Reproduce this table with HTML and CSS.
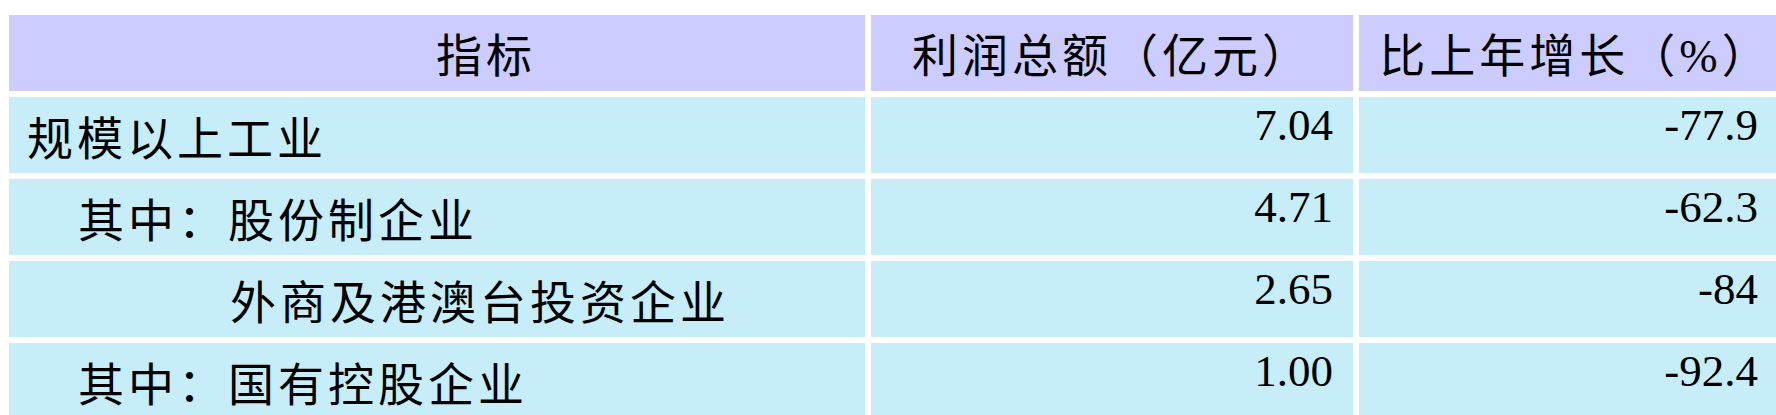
FILE: index.html
```html
<!DOCTYPE html>
<html lang="zh-CN">
<head>
<meta charset="utf-8">
<title>利润总额</title>
<link rel="stylesheet" href="styles.css">
</head>
<body>
<table class="stats">
  <colgroup>
    <col class="c-name">
    <col class="c-profit">
    <col class="c-growth">
  </colgroup>
  <thead>
    <tr>
      <th class="h-name">指标</th>
      <th class="h-profit">利润总额（亿元）</th>
      <th class="h-growth">比上年增长（%）</th>
    </tr>
  </thead>
  <tbody>
    <tr>
      <td class="name lvl0">规模以上工业</td>
      <td class="num">7.04</td>
      <td class="num">-77.9</td>
    </tr>
    <tr>
      <td class="name lvl1">其中：股份制企业</td>
      <td class="num">4.71</td>
      <td class="num">-62.3</td>
    </tr>
    <tr>
      <td class="name lvl4">外商及港澳台投资企业</td>
      <td class="num">2.65</td>
      <td class="num">-84</td>
    </tr>
    <tr>
      <td class="name lvl1">其中：国有控股企业</td>
      <td class="num">1.00</td>
      <td class="num">-92.4</td>
    </tr>
  </tbody>
</table>
</body>
</html>
```
FILE: styles.css
```css
html, body {
  margin: 0;
  padding: 0;
  background: #ffffff;
  overflow: hidden;
}

.stats {
  margin: 9px 0 0 3px;
  border-collapse: separate;
  border-spacing: 6px;
  table-layout: fixed;
  width: 1781px;
  font-family: "Liberation Serif", "Noto Sans CJK SC", serif;
  color: #000000;
}

.c-name { width: 856px; }
.c-profit { width: 482px; }
.c-growth { width: 419px; }

.stats th,
.stats td {
  padding: 0;
  vertical-align: top;
  white-space: nowrap;
  overflow: hidden;
}

.stats th {
  background: #ccccff;
  font-weight: normal;
  font-size: 46px;
  letter-spacing: 4px;
  padding-top: 7px;
  line-height: 69px;
  text-align: center;
}

.stats th.h-name { padding-left: 98px; }
.stats th.h-growth { padding-left: 14px; }

.stats td {
  background: #c7edf8;
}

.stats td.name {
  font-size: 46px;
  letter-spacing: 4px;
  padding-top: 10px;
  line-height: 66px;
  text-align: left;
}

.stats td.lvl0 { padding-left: 18px; }
.stats td.lvl1 { padding-left: 69px; }
.stats td.lvl4 { padding-left: 221px; }

.stats td.num {
  font-size: 45px;
  line-height: 56px;
  padding-bottom: 20px;
  padding-right: 20px;
  text-align: right;
}
```
